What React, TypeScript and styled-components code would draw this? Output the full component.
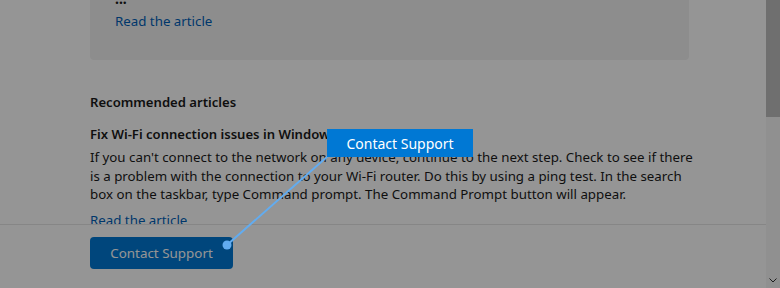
import styled, { createGlobalStyle } from "styled-components"

const GlobalStyle = createGlobalStyle`
html, body {
    margin: 0;
    padding: 0;
    background: #ffffff;
}
body {
    font-family: "Noto Sans", "Open Sans", sans-serif;
    color: #1a1a1a;
}
`

const Frame = styled.div`
position: relative;
width: 780px;
height: 288px;
overflow: hidden;
display: flex;
flex-direction: row;
background: #ffffff;
`
const Main = styled.div`
flex: 1;
display: flex;
flex-direction: column;
min-width: 0;
`
const ScrollArea = styled.div`
flex: 1;
overflow: hidden;
padding-left: 90px;
`
const Card = styled.div`
width: 599px;
margin-top: -11px;
padding: 0 25px 29px;
box-sizing: border-box;
background: #f2f2f2;
border-radius: 4px;
`
const Ellipsis = styled.div`
font-size: 14px;
line-height: 19px;
font-weight: 700;
margin-bottom: 4px;
`
const Link = styled.a`
display: block;
font-size: 13.3px;
line-height: 19px;
color: #005fb8;
text-decoration: none;
`
const Section = styled.div`
width: 599px;
padding-top: 33px;
`
const Heading = styled.div`
font-size: 13.1px;
line-height: 19px;
font-weight: 600;
margin-bottom: 13px;
`
const ArticleTitle = styled.div`
font-size: 13.1px;
line-height: 19px;
font-weight: 600;
margin-bottom: 4px;
`
const Paragraph = styled.p`
width: 620px;
margin: 0 0 7px;
font-size: 13.3px;
line-height: 18.6px;
`
const Footer = styled.div`
height: 51px;
border-top: 1px solid #e6e6e6;
padding: 12px 0 0 90px;
`
const PrimaryButton = styled.button`
width: 143px;
height: 32px;
border: none;
border-radius: 4px;
background: #0078d4;
color: #ffffff;
font-family: inherit;
font-size: 13.4px;
padding: 0;
`
const Scrollbar = styled.div`
width: 14px;
background: #f7f7f7;
display: flex;
flex-direction: column;
align-items: center;
`
const Thumb = styled.div`
width: 14px;
height: 117px;
background: #bebebe;
`
const Spacer = styled.div`
flex: 1;
`
const Arrow = styled.svg`
margin-bottom: 5px;
`
const Dim = styled.div`
position: absolute;
inset: 0;
background: rgba(0, 0, 0, 0.416);
`
const Connector = styled.svg`
position: absolute;
left: 0;
top: 0;
`
const Callout = styled.div`
position: absolute;
left: 327px;
top: 129px;
width: 146px;
height: 28px;
background: #0078d4;
color: #ffffff;
font-size: 14px;
display: flex;
align-items: center;
justify-content: center;
`

const App = () => {
    return (
        <>
            <GlobalStyle />
            <Frame>
                <Main>
                    <ScrollArea>
                        <Card>
                            <Ellipsis>...</Ellipsis>
                            <Link href="#">Read the article</Link>
                        </Card>
                        <Section>
                            <Heading>Recommended articles</Heading>
                            <ArticleTitle>Fix Wi-Fi connection issues in Windows</ArticleTitle>
                            <Paragraph>
                                If you can't connect to the network on any device, continue to the next step. Check to see if there<br />
                                is a problem with the connection to your Wi-Fi router. Do this by using a ping test. In the search<br />
                                box on the taskbar, type Command prompt. The Command Prompt button will appear.
                            </Paragraph>
                            <Link href="#">Read the article</Link>
                        </Section>
                    </ScrollArea>
                    <Footer>
                        <PrimaryButton>Contact Support</PrimaryButton>
                    </Footer>
                </Main>
                <Scrollbar>
                    <Thumb />
                    <Spacer />
                    <Arrow width="8" height="5" viewBox="0 0 8 5">
                        <path d="M0.5 0.5 L4 4 L7.5 0.5" fill="none" stroke="#333" strokeWidth="1" />
                    </Arrow>
                </Scrollbar>
                <Dim />
                <Connector width="780" height="288" viewBox="0 0 780 288">
                    <line x1="328" y1="156" x2="227" y2="245" stroke="#62acf0" strokeWidth="2" />
                    <circle cx="227" cy="245" r="4.5" fill="#62acf0" />
                </Connector>
                <Callout>Contact Support</Callout>
            </Frame>
        </>
    )
}

export default App
